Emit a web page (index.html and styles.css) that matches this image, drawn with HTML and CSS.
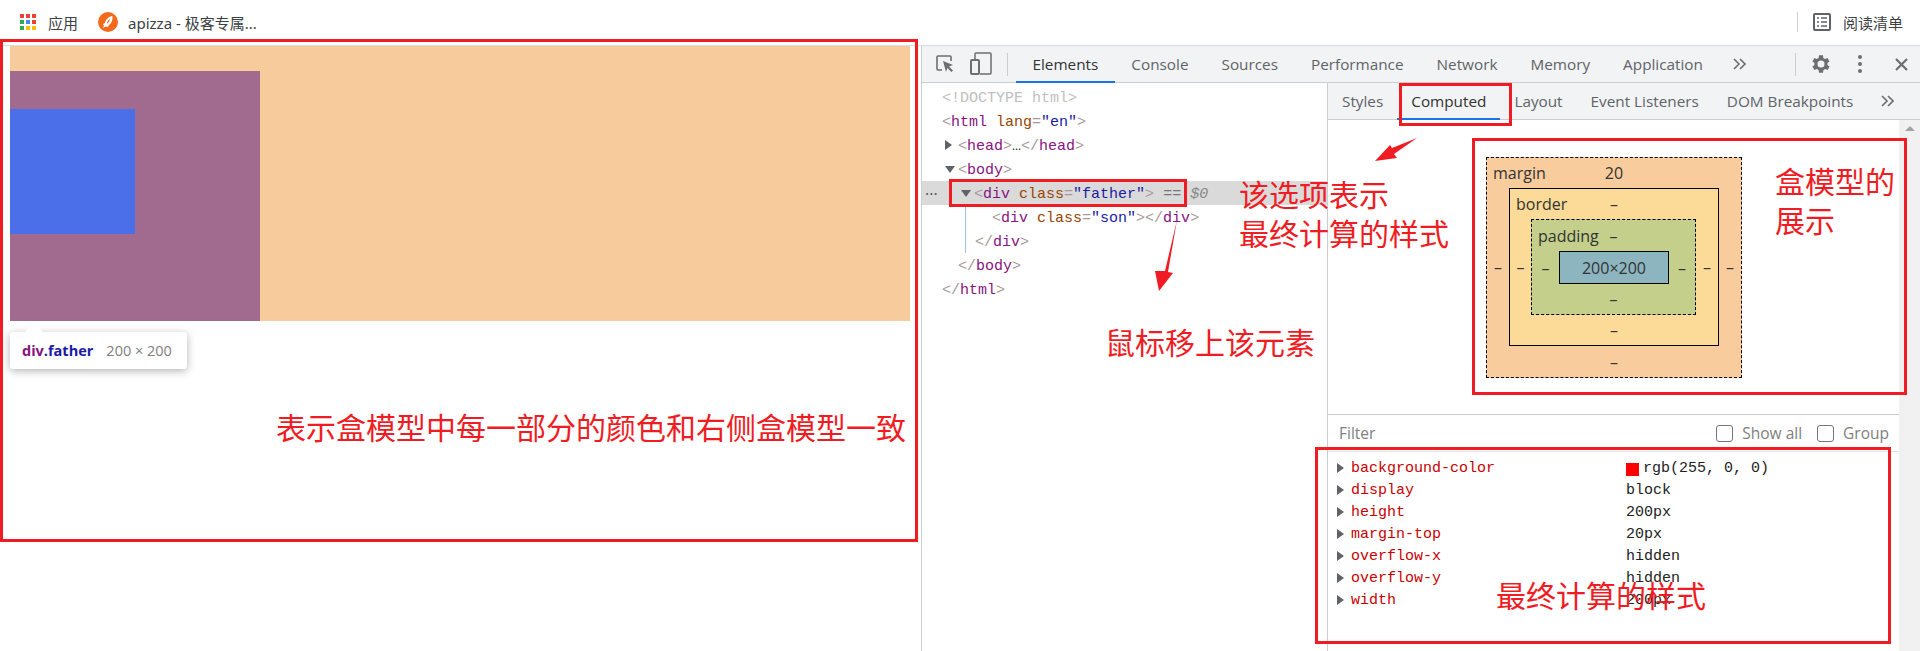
FILE: index.html
```html
<!DOCTYPE html>
<html lang="zh">
<head>
    <meta charset="UTF-8">
    <title>盒模型</title>
    <link rel="stylesheet" href="styles.css">
</head>
<body>
    <div class="bookmarks">
        <svg class="apps-icon" width="16" height="17" viewBox="0 0 16 17">
            <rect x="0" y="0" width="4" height="4" fill="#ea4335"/><rect x="6" y="0" width="4" height="4" fill="#ea4335"/><rect x="12" y="0" width="4" height="4" fill="#ea4335"/>
            <rect x="0" y="6" width="4" height="4" fill="#34a853"/><rect x="6" y="6" width="4" height="4" fill="#4285f4"/><rect x="12" y="6" width="4" height="4" fill="#ea4335"/>
            <rect x="0" y="12" width="4" height="4" fill="#34a853"/><rect x="6" y="12" width="4" height="4" fill="#fbbc05"/><rect x="12" y="12" width="4" height="4" fill="#fbbc05"/>
        </svg>
        <span class="bookmark-text apps-text">应用</span>
        <svg class="logo" width="20" height="20" viewBox="0 0 20 20">
            <circle cx="10" cy="10" r="10" fill="#f26b1d"/>
            <path d="M14.5 4 C10.5 4.5 7.5 7.5 7 11 L5 12 L6 14 L4.5 16 L8 14.5 L10 15 L11 13 C13.5 11.5 14.8 8 14.5 4 Z M9 11 C9.5 9 10.5 7.8 12 7 C11.8 8.8 11 10.2 9.5 11.5 Z" fill="#fff" fill-rule="evenodd"/>
        </svg>
        <span class="bookmark-text">apizza - 极客专属...</span>
        <div class="reading-list">
            <svg width="18" height="18" viewBox="0 0 18 18">
                <rect x="1" y="1" width="16" height="16" rx="1" fill="none" stroke="#5f6368" stroke-width="2"/>
                <path d="M4 5h2M8 5h6M4 9h2M8 9h6M4 13h2M8 13h6" stroke="#5f6368" stroke-width="1.5"/>
            </svg>
            <span class="bookmark-text">阅读清单</span>
        </div>
    </div>

    <div class="main">
        <div class="page">
            <div class="margin-area">
                <div class="father">
                    <div class="son"></div>
                </div>
            </div>
            <div class="tooltip">
                <span class="tip-tag">div</span><span class="tip-class">.father</span>
                <span class="tip-size">200 × 200</span>
            </div>
        </div>

        <div class="devtools">
            <div class="toolbar">
                <svg class="tool-icon inspect" width="20" height="20" viewBox="0 0 20 20">
                    <path d="M7 16H3a1 1 0 0 1-1-1V3a1 1 0 0 1 1-1h12a1 1 0 0 1 1 1v4" fill="none" stroke="#6e6e6e" stroke-width="1.6"/>
                    <path d="M8 7l10 4-4 1.5 4 4-1.6 1.6-4-4L11 18z" fill="#6e6e6e"/>
                </svg>
                <svg class="tool-icon device" width="22" height="24" viewBox="0 0 22 24">
                    <path d="M5 7V2a1 1 0 0 1 1-1h14a1 1 0 0 1 1 1v19a1 1 0 0 1-1 1H10" fill="none" stroke="#6e6e6e" stroke-width="1.5"/>
                    <rect x="1" y="8" width="8" height="14" rx="1" fill="none" stroke="#6e6e6e" stroke-width="2"/>
                </svg>
                <div class="toolbar-sep"></div>
                <div class="tabs">
                    <div class="tab active">Elements</div>
                    <div class="tab">Console</div>
                    <div class="tab">Sources</div>
                    <div class="tab">Performance</div>
                    <div class="tab">Network</div>
                    <div class="tab">Memory</div>
                    <div class="tab">Application</div>
                </div>
                <svg class="more" width="13" height="12" viewBox="0 0 13 12"><path d="M1 1l5 5-5 5M7 1l5 5-5 5" fill="none" stroke="#6e6e6e" stroke-width="1.6"/></svg>
                <div class="toolbar-sep sep-right"></div>
                <svg class="gear" width="20" height="20" viewBox="3 2 20 20">
                    <path d="M19.4 13a7.5 7.5 0 0 0 0-2l2.1-1.6-2-3.5-2.5 1a7.6 7.6 0 0 0-1.7-1L15 3.2h-4l-.4 2.7a7.6 7.6 0 0 0-1.7 1l-2.5-1-2 3.500L6.500 11a7.500 7.500 0 0 0 0 2l-2.100 1.600 2 3.500 2.500-1a7.600 7.600 0 0 0 1.700 1l.4 2.700h4l.4-2.700a7.600 7.600 0 0 0 1.700-1l2.500 1 2-3.500zM13 15.500a3.500 3.500 0 1 1 0-7 3.500 3.500 0 0 1 0 7z" fill="#6e6e6e" fill-rule="evenodd"/>
                </svg>
                <svg class="dots" width="4" height="18" viewBox="0 0 4 18"><circle cx="2" cy="2" r="2" fill="#6e6e6e"/><circle cx="2" cy="9" r="2" fill="#6e6e6e"/><circle cx="2" cy="16" r="2" fill="#6e6e6e"/></svg>
                <svg class="close" width="13" height="13" viewBox="0 0 13 13"><path d="M1 1l11 11M12 1L1 12" stroke="#6e6e6e" stroke-width="2.2"/></svg>
            </div>

            <div class="panels">
                <div class="elements">
                    <div class="row doctype">&lt;!DOCTYPE html&gt;</div>
                    <div class="row"><span class="br">&lt;</span><span class="tg">html</span> <span class="at">lang</span><span class="br">=</span><span class="vl">"en"</span><span class="br">&gt;</span></div>
                    <div class="row lvl1"><i class="tri-right"></i><span class="br">&lt;</span><span class="tg">head</span><span class="br">&gt;</span>…<span class="br">&lt;/</span><span class="tg">head</span><span class="br">&gt;</span></div>
                    <div class="row lvl1"><i class="tri-down"></i><span class="br">&lt;</span><span class="tg">body</span><span class="br">&gt;</span></div>
                    <div class="row selected"><span class="sel-dots">•••</span><i class="tri-down"></i><span class="br">&lt;</span><span class="tg">div</span> <span class="at">class</span><span class="br">=</span><span class="vl">"father"</span><span class="br">&gt;</span> <span class="eq">==</span> <span class="dollar">$0</span></div>
                    <div class="row lvl3"><span class="br">&lt;</span><span class="tg">div</span> <span class="at">class</span><span class="br">=</span><span class="vl">"son"</span><span class="br">&gt;&lt;/</span><span class="tg">div</span><span class="br">&gt;</span></div>
                    <div class="row lvl2"><span class="br">&lt;/</span><span class="tg">div</span><span class="br">&gt;</span></div>
                    <div class="row lvl1b"><span class="br">&lt;/</span><span class="tg">body</span><span class="br">&gt;</span></div>
                    <div class="row"><span class="br">&lt;/</span><span class="tg">html</span><span class="br">&gt;</span></div>
                    <div class="tree-line"></div>
                </div>

                <div class="sidebar">
                    <div class="side-tabs">
                        <div class="side-tab">Styles</div>
                        <div class="side-tab active">Computed</div>
                        <div class="side-tab">Layout</div>
                        <div class="side-tab">Event Listeners</div>
                        <div class="side-tab">DOM Breakpoints</div>
                        <svg class="more" width="13" height="12" viewBox="0 0 13 12"><path d="M1 1l5 5-5 5M7 1l5 5-5 5" fill="none" stroke="#6e6e6e" stroke-width="1.6"/></svg>
                    </div>
                    <div class="side-body">
                        <div class="side-main">
                            <div class="box-panel">
                                <div class="bm bm-margin">
                                    <div class="bm-top"><span class="bm-label">margin</span><span>20</span><span></span></div>
                                    <div class="bm-side">–</div>
                                    <div class="bm bm-border">
                                        <div class="bm-top"><span class="bm-label">border</span><span>–</span><span></span></div>
                                        <div class="bm-side">–</div>
                                        <div class="bm bm-padding">
                                            <div class="bm-top"><span class="bm-label">padding</span><span>–</span><span></span></div>
                                            <div class="bm-side">–</div>
                                            <div class="bm-content">200×200</div>
                                            <div class="bm-side">–</div>
                                            <div class="bm-bottom">–</div>
                                        </div>
                                        <div class="bm-side">–</div>
                                        <div class="bm-bottom">–</div>
                                    </div>
                                    <div class="bm-side">–</div>
                                    <div class="bm-bottom">–</div>
                                </div>
                            </div>
                            <div class="filter-bar">
                                <span class="filter-text">Filter</span>
                                <label class="check"><i class="check-box"></i>Show all</label>
                                <label class="check"><i class="check-box"></i>Group</label>
                            </div>
                            <div class="computed">
                                <div class="prop"><i class="tri-right"></i><span class="prop-name">background-color</span><span class="prop-val"><i class="swatch"></i>rgb(255, 0, 0)</span></div>
                                <div class="prop"><i class="tri-right"></i><span class="prop-name">display</span><span class="prop-val">block</span></div>
                                <div class="prop"><i class="tri-right"></i><span class="prop-name">height</span><span class="prop-val">200px</span></div>
                                <div class="prop"><i class="tri-right"></i><span class="prop-name">margin-top</span><span class="prop-val">20px</span></div>
                                <div class="prop"><i class="tri-right"></i><span class="prop-name">overflow-x</span><span class="prop-val">hidden</span></div>
                                <div class="prop"><i class="tri-right"></i><span class="prop-name">overflow-y</span><span class="prop-val">hidden</span></div>
                                <div class="prop"><i class="tri-right"></i><span class="prop-name">width</span><span class="prop-val">200px</span></div>
                            </div>
                        </div>
                        <div class="scrollbar"><i class="scroll-up"></i></div>
                    </div>
                </div>
            </div>
        </div>
    </div>

    <!-- 红色标注 -->
    <div class="mark mark-page"></div>
    <div class="mark mark-row"></div>
    <div class="mark mark-tab"></div>
    <div class="mark mark-box"></div>
    <div class="mark mark-list"></div>

    <svg class="arrows" width="1920" height="651" viewBox="0 0 1920 651">
        <path d="M1417 138L1392 148 1390 145 1375 161 1397 158 1394 154z" fill="#f01c24"/>
        <path d="M1177 220L1165 271 1155 271 1159 291 1173 273 1168 272z" fill="#f01c24"/>
    </svg>

    <div class="note note-page">表示盒模型中每一部分的颜色和右侧盒模型一致</div>
    <div class="note note-option">该选项表示<br>最终计算的样式</div>
    <div class="note note-box">盒模型的<br>展示</div>
    <div class="note note-hover">鼠标移上该元素</div>
    <div class="note note-list">最终计算的样式</div>
</body>
</html>
```

FILE: styles.css
```css
* {
    box-sizing: border-box;
}
html, body {
    margin: 0;
    height: 651px;
    overflow: hidden;
}
body {
    position: relative;
    background-color: #fff;
    font-family: "Open Sans", "Noto Sans CJK SC", sans-serif;
    color: #333;
    display: flex;
    flex-direction: column;
}

/* bookmarks */
.bookmarks {
    height: 46px;
    flex-shrink: 0;
    display: flex;
    align-items: center;
    padding: 0 17px 1px 20px;
    border-bottom: 1px solid #dadce0;
}
.bookmark-text {
    font-size: 15px;
    color: #3c4043;
    font-family: "Noto Sans", "Noto Sans CJK SC", sans-serif;
}
.apps-text {
    margin-left: 12px;
    margin-right: 20px;
}
.logo {
    margin-right: 10px;
}
.reading-list {
    margin-left: auto;
    display: flex;
    align-items: center;
    gap: 12px;
    height: 20px;
    padding-left: 15px;
    border-left: 1px solid #d0d0d0;
}

/* page */
.main {
    flex: 1;
    display: flex;
    min-height: 0;
}
.page {
    width: 921px;
    flex-shrink: 0;
    padding-left: 10px;
    padding-right: 11px;
    position: relative;
}
.margin-area {
    height: 275px;
    padding-top: 25px;
    background-color: #f8cb9c;
}
.father {
    width: 250px;
    height: 250px;
    padding-top: 38px;
    background-color: #a06b8e;
}
.son {
    width: 125px;
    height: 125px;
    background-color: #4a6fe8;
}
.tooltip {
    position: absolute;
    left: 10px;
    top: 286px;
    width: 177px;
    height: 37px;
    padding: 0 0 0 12px;
    display: flex;
    align-items: center;
    white-space: nowrap;
    background-color: #fff;
    border-radius: 3px;
    box-shadow: 0 2px 8px rgba(0, 0, 0, 0.3);
    font-size: 14.5px;
}
.tooltip::before {
    content: "";
    position: absolute;
    left: 15px;
    top: -9px;
    border-left: 9px solid transparent;
    border-right: 9px solid transparent;
    border-bottom: 9px solid #fff;
}
.tip-tag {
    color: #881280;
    font-weight: 700;
}
.tip-class {
    color: #1a1aa6;
    font-weight: 700;
}
.tip-size {
    color: #808080;
    margin-left: 13px;
}

/* devtools */
.devtools {
    flex: 1;
    min-width: 0;
    display: flex;
    flex-direction: column;
    border-left: 1px solid #cbcdd1;
}
.toolbar {
    height: 37px;
    flex-shrink: 0;
    display: flex;
    align-items: center;
    background-color: #f1f3f4;
    border-bottom: 1px solid #cbcdd1;
}
.inspect {
    margin-left: 13px;
    margin-right: 15px;
}
.toolbar-sep {
    width: 1px;
    height: 23px;
    background-color: #ccc;
    margin-left: 15px;
}
.tabs {
    display: flex;
    height: 100%;
    margin-left: 8px;
}
.tab {
    padding: 0 16.5px;
    display: flex;
    align-items: center;
    font-size: 15.3px;
    color: #5f6368;
    border-bottom: 2px solid transparent;
    margin-bottom: -1px;
}
.tab.active {
    color: #333;
    border-bottom-color: #1a73e8;
}
.more {
    margin-left: 14px;
}
.sep-right {
    margin-left: 49px;
    margin-right: 15px;
}
.dots {
    margin-left: 27px;
}
.close {
    margin-left: 33px;
}

.panels {
    flex: 1;
    display: flex;
    min-height: 0;
}
.elements {
    width: 405px;
    flex-shrink: 0;
    padding-top: 2px;
    position: relative;
    font-family: "Liberation Mono", monospace;
    font-size: 15px;
}
.row {
    height: 24px;
    line-height: 28px;
    padding-left: 20px;
    white-space: pre;
    color: #333;
    position: relative;
}
.doctype {
    color: #c0c0c0;
}
.lvl1, .lvl1b {
    padding-left: 36px;
}
.lvl2 {
    padding-left: 53px;
}
.lvl3 {
    padding-left: 70px;
}
.selected {
    padding-left: 52px;
    background-color: #dadada;
}
.sel-dots {
    position: absolute;
    left: 3px;
    top: -1px;
    font-size: 7px;
    color: #555;
}
.br {
    color: #a89a9a;
}
.tg {
    color: #881280;
}
.at {
    color: #994500;
}
.vl {
    color: #1a1aa6;
}
.eq {
    color: #777;
}
.dollar {
    color: #888;
    font-style: italic;
}
.tri-right, .tri-down {
    position: absolute;
    width: 0;
    height: 0;
}
.tri-right {
    margin-left: -13px;
    margin-top: 7px;
    border-top: 5px solid transparent;
    border-bottom: 5px solid transparent;
    border-left: 7px solid #5f6368;
}
.tri-down {
    margin-left: -13px;
    margin-top: 9px;
    border-left: 5px solid transparent;
    border-right: 5px solid transparent;
    border-top: 7px solid #5f6368;
}
.tree-line {
    position: absolute;
    left: 43px;
    top: 122px;
    width: 1px;
    height: 48px;
    background-color: #a8c0e0;
}

/* sidebar */
.sidebar {
    flex: 1;
    min-width: 0;
    display: flex;
    flex-direction: column;
    border-left: 1px solid #cbcdd1;
}
.side-tabs {
    height: 37px;
    flex-shrink: 0;
    display: flex;
    align-items: center;
    background-color: #f1f3f4;
    border-bottom: 1px solid #cbcdd1;
    font-size: 15.3px;
}
.side-tab {
    height: 100%;
    padding: 0 14px;
    display: flex;
    align-items: center;
    color: #5f6368;
    border-bottom: 2px solid transparent;
    margin-bottom: -1px;
}
.side-tab.active {
    color: #333;
    border-bottom-color: #1a73e8;
}
.side-body {
    flex: 1;
    display: flex;
    min-height: 0;
}
.side-main {
    flex: 1;
    min-width: 0;
}
.scrollbar {
    width: 21px;
    background-color: #f1f1f1;
    position: relative;
}
.scroll-up {
    position: absolute;
    left: 6px;
    top: 6px;
    border-left: 5px solid transparent;
    border-right: 5px solid transparent;
    border-bottom: 5px solid #a3a3a3;
}

/* box model */
.box-panel {
    height: 295px;
    padding: 37px 0 0 158px;
    border-bottom: 1px solid #cbcdd1;
}
.bm {
    display: grid;
    font-size: 16px;
    line-height: 1;
    text-align: center;
    color: #333;
}
.bm-margin {
    width: 256px;
    height: 221px;
    grid-template-columns: 22px 210px 22px;
    grid-template-rows: 30px 158px 31px;
    background-color: #f8cc9d;
    border: 1px dashed #000;
}
.bm-border {
    grid-template-columns: 21px 165px 22px;
    grid-template-rows: 30px 96px 30px;
    background-color: #fcdb98;
    border: 1px solid #000;
}
.bm-padding {
    grid-template-columns: 27px 110px 26px;
    grid-template-rows: 31px 33px 30px;
    background-color: #c3cf8b;
    border: 1px dashed #000;
}
.bm-top {
    grid-column: 1 / -1;
    display: grid;
    grid-template-columns: 1fr auto 1fr;
    align-items: center;
}
.bm-label {
    text-align: left;
    padding-left: 6px;
}
.bm-side {
    display: flex;
    align-items: center;
    justify-content: center;
}
.bm-bottom {
    grid-column: 1 / -1;
    display: flex;
    align-items: center;
    justify-content: center;
}
.bm-content {
    display: flex;
    align-items: center;
    justify-content: center;
    background-color: #8cb5bf;
    border: 1px solid #000;
}

/* filter */
.filter-bar {
    height: 37px;
    display: flex;
    align-items: center;
    padding: 0 10px 0 11px;
    border-bottom: 1px solid #e4e4e4;
    font-size: 15.5px;
    color: #808080;
}
.filter-text {
    margin-right: auto;
}
.check {
    display: flex;
    align-items: center;
    gap: 9px;
    margin-left: 15px;
    color: #808080;
}
.check-box {
    width: 17px;
    height: 17px;
    border: 1px solid #767676;
    border-radius: 3px;
    background-color: #fff;
}

/* computed */
.computed {
    padding-top: 6px;
    font-family: "Liberation Mono", monospace;
    font-size: 15px;
}
.prop {
    height: 22px;
    line-height: 22px;
    padding-left: 23px;
    display: flex;
    white-space: pre;
}
.prop .tri-right {
    margin-top: 5px;
    margin-left: -14px;
}
.prop-name {
    width: 275px;
    flex-shrink: 0;
    color: #c80000;
}
.prop-val {
    color: #222;
    display: flex;
    align-items: center;
}
.swatch {
    width: 13px;
    height: 13px;
    margin-right: 4px;
    background-color: #ff0000;
}

/* annotations */
.mark {
    position: absolute;
    border: 3px solid #f01c24;
}
.mark-page {
    left: 0;
    top: 39px;
    width: 918px;
    height: 503px;
}
.mark-row {
    left: 949px;
    top: 179px;
    width: 238px;
    height: 28px;
}
.mark-tab {
    left: 1399px;
    top: 83px;
    width: 113px;
    height: 43px;
}
.mark-box {
    left: 1472px;
    top: 138px;
    width: 435px;
    height: 257px;
}
.mark-list {
    left: 1315px;
    top: 447px;
    width: 576px;
    height: 197px;
}
.arrows {
    position: absolute;
    left: 0;
    top: 0;
}
.note {
    position: absolute;
    font-family: "Noto Sans CJK SC", sans-serif;
    font-size: 30px;
    line-height: 39px;
    color: #f01c24;
    white-space: nowrap;
}
.note-page {
    left: 276px;
    top: 407px;
}
.note-option {
    left: 1239px;
    top: 174px;
}
.note-box {
    left: 1775px;
    top: 161px;
}
.note-hover {
    left: 1105px;
    top: 322px;
}
.note-list {
    left: 1496px;
    top: 575px;
}
```
